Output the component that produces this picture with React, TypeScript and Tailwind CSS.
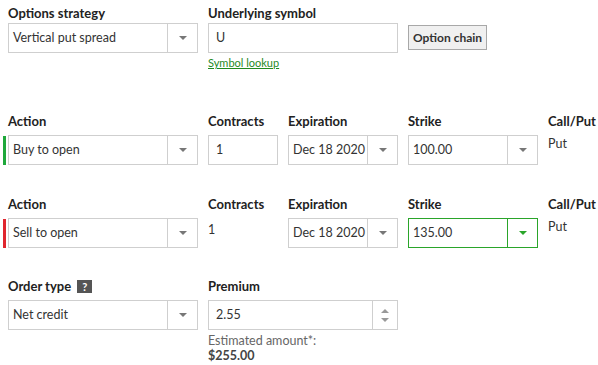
import React from "react";

const font = { fontFamily: "Lato, 'Liberation Sans', sans-serif" };

function Caret({ color = "#777" }: { color?: string }) {
  return (
    <svg width="8" height="4" viewBox="0 0 8 4" aria-hidden="true">
      <path d="M0 0h8L4 4z" fill={color} />
    </svg>
  );
}

function Label({ children }: { children: React.ReactNode }) {
  return <div className="h-[18px] whitespace-nowrap text-[13px] font-bold leading-[18px] text-[#222]">{children}</div>;
}

function Select({
  value,
  width,
  arrowW = 30,
  active = false,
}: {
  value: string;
  width: string;
  arrowW?: number;
  active?: boolean;
}) {
  return (
    <div
      className={`flex h-[30px] items-stretch border bg-white ${width} ${
        active ? "border-[#2aa52a]" : "border-[#cfcfcf]"
      }`}
    >
      <div className="flex flex-1 items-center whitespace-nowrap pl-[4px] text-[12.5px] text-[#333]">{value}</div>
      <div
        className={`flex items-center justify-center border-l ${active ? "border-[#2aa52a]" : "border-[#cfcfcf]"}`}
        style={{ width: arrowW }}
      >
        <Caret color={active ? "#2aa52a" : "#777"} />
      </div>
    </div>
  );
}

function Input({ value, width }: { value: string; width: string }) {
  return (
    <div className={`flex h-[30px] items-center border border-[#cfcfcf] bg-white pl-[7px] text-[12.5px] text-[#333] ${width}`}>
      {value}
    </div>
  );
}

function LegRow({
  bar,
  action,
  contractsInput,
  strike,
  strikeActive,
}: {
  bar: string;
  action: string;
  contractsInput: boolean;
  strike: string;
  strikeActive?: boolean;
}) {
  return (
    <div className="flex gap-[10px]">
      <div className="relative">
        <Label>Action</Label>
        <div className={`absolute left-[-5px] top-[24px] h-[29px] w-[3px] ${bar}`} />
        <div className="mt-[5px]">
          <Select value={action} width="w-[190px]" />
        </div>
      </div>
      <div className="w-[70px]">
        <Label>Contracts</Label>
        <div className="mt-[5px]">
          {contractsInput ? (
            <Input value="1" width="w-[70px]" />
          ) : (
            <div className="pt-[3px] text-[12.5px] leading-[18px] text-[#333]">1</div>
          )}
        </div>
      </div>
      <div>
        <Label>Expiration</Label>
        <div className="mt-[5px]">
          <Select value="Dec 18 2020" width="w-[110px]" />
        </div>
      </div>
      <div>
        <Label>Strike</Label>
        <div className="mt-[5px]">
          <Select value={strike} width="w-[130px]" active={strikeActive} />
        </div>
      </div>
      <div>
        <Label>Call/Put</Label>
        <div className="mt-[5px] text-[12.5px] leading-[18px] text-[#333]">Put</div>
      </div>
    </div>
  );
}

export default function App() {
  return (
    <div className="h-[365px] w-[598px] bg-white pl-[8px] pt-[4px]" style={font}>
      <div className="flex gap-[10px]">
        <div>
          <Label>Options strategy</Label>
          <div className="mt-[1px]">
            <Select value="Vertical put spread" width="w-[190px]" />
          </div>
        </div>
        <div>
          <Label>Underlying symbol</Label>
          <div className="mt-[1px] flex items-start gap-[10px]">
            <div>
              <Input value="U" width="w-[190px]" />
              <a className="mt-[3px] block text-[11px] leading-[14px] text-[#1f8a1f] underline" href="#">
                Symbol lookup
              </a>
            </div>
            <button className="mt-[2px] h-[25px] border border-[#a8a8a8] bg-[#f0f0f0] px-[4px] text-[12px] font-bold text-[#333]">
              Option chain
            </button>
          </div>
        </div>
      </div>

      <div className="mt-[42px]">
        <LegRow bar="bg-[#1fa83a]" action="Buy to open" contractsInput strike="100.00" />
      </div>
      <div className="mt-[30px]">
        <LegRow bar="bg-[#e0262e]" action="Sell to open" contractsInput={false} strike="135.00" strikeActive />
      </div>

      <div className="mt-[29px] flex gap-[10px]">
        <div>
          <div className="flex items-center gap-[6px]">
            <Label>Order type</Label>
            <span className="flex h-[13px] w-[15px] items-center justify-center bg-[#555] text-[11px] font-bold leading-none text-white">
              ?
            </span>
          </div>
          <div className="mt-[5px]">
            <Select value="Net credit" width="w-[190px]" />
          </div>
        </div>
        <div>
          <Label>Premium</Label>
          <div className="mt-[5px] flex h-[30px] w-[190px] items-stretch border border-[#cfcfcf]">
            <div className="flex flex-1 items-center pl-[7px] text-[12.5px] text-[#333]">2.55</div>
            <div className="flex w-[25px] flex-col items-center justify-center gap-[5px] border-l border-[#cfcfcf]">
              <svg width="8" height="4" viewBox="0 0 8 4">
                <path d="M0 4h8L4 0z" fill="#999" />
              </svg>
              <svg width="8" height="4" viewBox="0 0 8 4">
                <path d="M0 0h8L4 4z" fill="#999" />
              </svg>
            </div>
          </div>
          <div className="mt-[3px] text-[12.5px] leading-[15px] text-[#666]">Estimated amount*:</div>
          <div className="text-[12.5px] font-bold leading-[15px] text-[#444]">$255.00</div>
        </div>
      </div>
    </div>
  );
}
